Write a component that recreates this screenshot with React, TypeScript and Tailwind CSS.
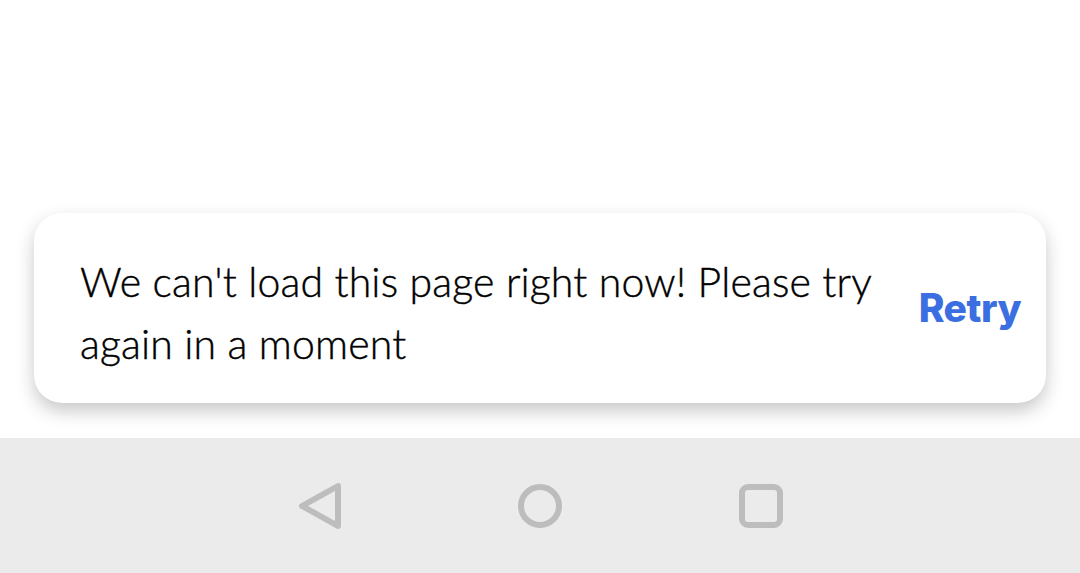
export default function App() {
  return (
    <div className="flex h-[573px] w-[1080px] flex-col bg-white">
      <div className="flex flex-1 flex-col justify-end px-[34px] pb-[35px]">
        <div className="flex h-[190px] items-center justify-between rounded-[28px] bg-white pl-[46px] pr-[25px] shadow-[0_8px_18px_rgba(0,0,0,0.22)]">
          <p className="mt-[10px] w-[815px] font-['Lato',sans-serif] text-[41px] font-light leading-[62px] tracking-[0.15px] text-black [-webkit-text-stroke:0.4px_black]">
            We can't load this page right now! Please try again in a moment
          </p>
          <button className="font-['Inter',sans-serif] text-[39px] font-extrabold tracking-[-0.5px] text-[#3b6ee0]">
            Retry
          </button>
        </div>
      </div>
      <div className="flex h-[135px] items-center justify-center gap-[175px] bg-[#ebebeb]">
        <svg width="46" height="46" viewBox="0 0 46 46" fill="none" stroke="#bdbdbd" strokeWidth="6" strokeLinejoin="round">
          <path d="M42 3 L6 23 L42 43 Z" />
        </svg>
        <svg width="46" height="46" viewBox="0 0 46 46" fill="none" stroke="#bdbdbd" strokeWidth="6">
          <circle cx="23" cy="23" r="19" />
        </svg>
        <svg width="46" height="46" viewBox="0 0 46 46" fill="none" stroke="#bdbdbd" strokeWidth="6">
          <rect x="4" y="4" width="38" height="38" rx="6" />
        </svg>
      </div>
    </div>
  );
}
